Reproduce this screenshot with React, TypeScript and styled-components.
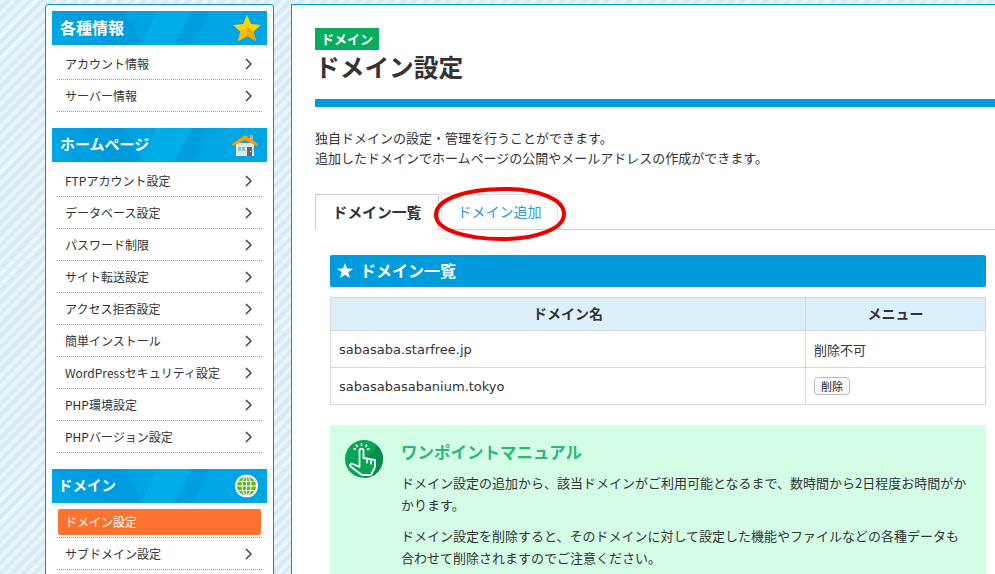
import React from 'react';
import styled, { createGlobalStyle } from 'styled-components';

const GlobalStyle = createGlobalStyle`
  html, body {
    margin: 0;
    height: 574px;
    overflow: hidden;
  }
  body {
    font-family: "DejaVu Sans", "Noto Sans CJK JP", sans-serif;
    color: #333;
    background: repeating-linear-gradient(135deg, #e8f6fb 0, #e8f6fb 4px, #d6ebf3 4px, #d6ebf3 8px);
  }
`;

const Page = styled.div`
  display: flex;
  align-items: flex-start;
  gap: 17px;
  padding: 4px 0 0 45px;
  width: 1100px;
`;

const Sidebar = styled.aside`
  flex: none;
  width: 215px;
  padding: 6px;
  background: #fff;
  border: 1px solid #0f8fc6;
  border-radius: 3px;
`;

const MenuGroup = styled.section`
  margin-bottom: 16px;
`;

const MenuHead = styled.h2<{ $inset?: number; $size?: number }>`
  position: relative;
  display: flex;
  align-items: center;
  box-sizing: border-box;
  height: 34px;
  margin: 0;
  padding: 0 0 3px ${(p) => p.$inset ?? 8}px;
  overflow: hidden;
  background: #00a0e0;
  color: #fff;
  font: bold ${(p) => p.$size ?? 15}px "Noto Sans CJK JP", sans-serif;
`;

const HeadPattern = styled.svg`
  position: absolute;
  inset: 0;
`;

const HeadLabel = styled.span`
  position: relative;
`;

const HeadIcon = styled.svg`
  position: absolute;
  top: 50%;
  transform: translateY(-50%);
`;

const MenuList = styled.ul`
  list-style: none;
  margin: 0;
  padding: 3px 5px 0;
`;

const MenuItem = styled.li`
  display: flex;
  align-items: center;
  justify-content: space-between;
  box-sizing: border-box;
  height: 32px;
  padding: 0 10px 0 8px;
  border-bottom: 1px dotted #999;
  font: 12px "Noto Sans CJK JP", sans-serif;
  color: #333;
`;

const CurrentItem = styled.li`
  box-sizing: border-box;
  height: 32px;
  padding: 3px 1px 2px;
  border-bottom: 1px dotted #999;
  font: 12px "Noto Sans CJK JP", sans-serif;
  color: #fff;
`;

const CurrentFill = styled.div`
  display: flex;
  align-items: center;
  box-sizing: border-box;
  height: 26px;
  padding: 0 0 2px 7px;
  background: #ff732e;
  border-radius: 2px;
`;

const Main = styled.main`
  flex: none;
  width: 686px;
  padding: 23px 23px 40px;
  background: #fff;
  border: 1px solid #0099dd;
`;

const Badge = styled.div`
  display: flex;
  align-items: center;
  justify-content: center;
  box-sizing: border-box;
  width: 64px;
  height: 22px;
  padding-bottom: 2px;
  background: #06ad5f;
  color: #fff;
  font: bold 13px "Noto Sans CJK JP", sans-serif;
`;

const Title = styled.h1`
  height: 37px;
  margin: 0;
  color: #333;
  font: bold 24.700px/33px "Noto Sans CJK JP", sans-serif;
`;

const TitleBar = styled.div`
  height: 8px;
  margin-top: 12px;
  background: #009bdc;
`;

const Lead = styled.p`
  margin: 21px 0 26px;
  font: 13px/20px "Noto Sans CJK JP", sans-serif;
`;

const Tabs = styled.div`
  position: relative;
  display: flex;
  align-items: flex-end;
  gap: 2px;
  height: 35px;
  border-bottom: 1px solid #ccc;
`;

const Tab = styled.div<{ $active?: boolean }>`
  display: flex;
  align-items: center;
  justify-content: center;
  box-sizing: border-box;
  height: ${(p) => (p.$active ? 36 : 35)}px;
  margin-bottom: ${(p) => (p.$active ? -1 : 0)}px;
  padding-bottom: 3px;
  width: ${(p) => (p.$active ? 124 : 117)}px;
  background: #fff;
  border: 1px solid ${(p) => (p.$active ? '#ccc' : '#e2e2e2')};
  border-bottom: none;
  color: ${(p) => (p.$active ? '#333' : '#2c9bd6')};
  font: ${(p) => (p.$active ? 'bold 14.800px' : 'normal 14px')} "Noto Sans CJK JP", sans-serif;
`;

const Ring = styled.svg`
  position: absolute;
  left: 117px;
  top: -9px;
  pointer-events: none;
`;

const Panel = styled.div`
  margin: 25px 15px 0;
`;

const PanelHead = styled.h3`
  display: flex;
  align-items: center;
  gap: 7px;
  box-sizing: border-box;
  height: 32px;
  margin: 0;
  padding: 0 0 2px 7px;
  background: #009bdc;
  border-radius: 2px;
  color: #fff;
  font: bold 16px "Noto Sans CJK JP", sans-serif;
`;

const Table = styled.table`
  width: 100%;
  margin-top: 10px;
  border-collapse: collapse;
  table-layout: fixed;
`;

const Th = styled.th`
  box-sizing: border-box;
  height: 33px;
  padding: 0 0 3px;
  background: #dcf0fb;
  border: 1px solid #d5d5d5;
  color: #333;
  font: bold 14px "Noto Sans CJK JP", sans-serif;
`;

const Td = styled.td`
  height: 36px;
  padding: 0 8px;
  border: 1px solid #d5d5d5;
  font: 13px "DejaVu Sans", "Noto Sans CJK JP", sans-serif;
  color: #333;
`;

const DeleteButton = styled.button`
  display: block;
  width: 36px;
  height: 18px;
  padding: 0;
  background: linear-gradient(#fff, #f8f8f8);
  border: 1px solid #bbb;
  border-radius: 4px;
  color: #222;
  font: 11px "Noto Sans CJK JP", sans-serif;
`;

const Note = styled.div`
  display: flex;
  gap: 18px;
  margin-top: 20px;
  padding: 15px 17px 20px 15px;
  background: #d4fde6;
`;

const NoteBody = styled.div`
  flex: 1;
`;

const NoteTitle = styled.h4`
  margin: 0 0 8px;
  color: #2db77b;
  font: bold 16.500px/24px "Noto Sans CJK JP", sans-serif;
`;

const NoteText = styled.p`
  margin: 0 0 9px;
  font: 13px/22px "Noto Sans CJK JP", sans-serif;
`;

const Chevron = () => (
  <svg width="7" height="12" viewBox="0 0 7 12" fill="none">
    <path d="M1 1l5 5-5 5" stroke="#444" strokeWidth="1.5" />
  </svg>
);

const Pattern = () => (
  <HeadPattern width="215" height="34" viewBox="0 0 215 34">
    <polygon points="0,0 25,34 0,34" fill="#00a6e3" />
    <polygon points="30,0 72,0 90,34 50,34" fill="#009bdd" />
    <polygon points="72,0 104,0 90,34" fill="#00a4e2" />
    <polygon points="104,0 140,0 122,34 90,34" fill="#00ade6" />
    <polygon points="140,0 157,0 141,34 122,34" fill="#009edf" />
    <polygon points="157,0 215,0 215,34 141,34" fill="#00a5e3" />
  </HeadPattern>
);

const StarIcon = () => (
  <HeadIcon style={{ right: 6 }} width="28" height="26" viewBox="0 0 28 26">
    <polygon points="14,0 18,9 28,10 20.5,16.5 23,26 14,21 5,26 7.5,16.5 0,10 10,9" fill="#ffd400" />
    <polygon points="14,11 20.5,16.5 23,26 14,21" fill="#f0a800" />
    <polygon points="14,11 14,21 5,26 7.5,16.5" fill="#f7be00" />
  </HeadIcon>
);

const HouseIcon = () => (
  <HeadIcon style={{ right: 9 }} width="26" height="22" viewBox="0 0 26 22">
    <rect x="18" y="1" width="3" height="8" fill="#b9a8a0" />
    <rect x="4" y="9" width="18" height="13" fill="#efe6d8" />
    <polygon points="13,1 26,10 25,12 13,6 1,12 0,10" fill="#ff9c00" />
    <rect x="6" y="13" width="3" height="4" fill="#6fcde0" />
    <rect x="10" y="13" width="3" height="4" fill="#6fcde0" />
    <rect x="15" y="13" width="5" height="9" fill="#666" />
    <rect x="18" y="17" width="1" height="1" fill="#fff" />
  </HeadIcon>
);

const GlobeIcon = () => (
  <HeadIcon style={{ right: 9 }} width="23" height="23" viewBox="0 0 23 23">
    <circle cx="11.5" cy="11.5" r="11.5" fill="#fff" />
    <circle cx="11.5" cy="11.5" r="9.5" fill="#5fb81c" />
    <g stroke="#fff" strokeWidth="1.1" fill="none">
      <ellipse cx="11.5" cy="11.5" rx="4.5" ry="9.5" />
      <path d="M11.5 2v19M2 11.5h19M3.5 7h16M3.5 16h16" />
    </g>
  </HeadIcon>
);

const HandIcon = () => (
  <svg width="38" height="38" viewBox="0 0 38 38" style={{ flex: 'none' }}>
    <circle cx="19" cy="19" r="19" fill="#07a455" />
    <path d="M32.4 5.600A19 19 0 0 1 20 38L14 27z" fill="#058c49" />
    <path
      d="M14.500 10.500c0-2.500 4-2.500 4 0V18l11.500 2v7l-4 8h-9L5.500 26.500c-1.500-1.500.5-3.500 2.500-2.500l6.500 3z"
      fill="#07a455"
      stroke="#fff"
      strokeWidth="1.800"
      strokeLinejoin="round"
    />
    <path d="M22 18.500v5M26 19.500v5" stroke="#fff" strokeWidth="1.500" />
    <path d="M16.500 3v3M11 4.500l1.500 2.500M22 4.500L20.500 7M8.500 8.500l2.500 1M24.500 8.500L22 9.500" stroke="#fff" strokeWidth="1.500" />
  </svg>
);

const menu = [
  {
    head: '各種情報',
    size: 16,
    icon: <StarIcon />,
    items: ['アカウント情報', 'サーバー情報'],
  },
  {
    head: 'ホームページ',
    icon: <HouseIcon />,
    items: [
      'FTPアカウント設定',
      'データベース設定',
      'パスワード制限',
      'サイト転送設定',
      'アクセス拒否設定',
      '簡単インストール',
      'WordPressセキュリティ設定',
      'PHP環境設定',
      'PHPバージョン設定',
    ],
  },
  {
    head: 'ドメイン',
    size: 14.5,
    icon: <GlobeIcon />,
    inset: 6,
    current: 'ドメイン設定',
    items: ['サブドメイン設定'],
  },
];

export default function App() {
  return (
    <Page>
      <GlobalStyle />
      <Sidebar>
        {menu.map((group) => (
          <MenuGroup key={group.head}>
            <MenuHead $inset={group.inset} $size={group.size}>
              <Pattern />
              <HeadLabel>{group.head}</HeadLabel>
              {group.icon}
            </MenuHead>
            <MenuList>
              {group.current && (
                <CurrentItem>
                  <CurrentFill>{group.current}</CurrentFill>
                </CurrentItem>
              )}
              {group.items.map((item) => (
                <MenuItem key={item}>
                  {item}
                  <Chevron />
                </MenuItem>
              ))}
            </MenuList>
          </MenuGroup>
        ))}
      </Sidebar>
      <Main>
        <Badge>ドメイン</Badge>
        <Title>ドメイン設定</Title>
        <TitleBar />
        <Lead>
          独自ドメインの設定・管理を行うことができます。
          <br />
          追加したドメインでホームページの公開やメールアドレスの作成ができます。
        </Lead>
        <Tabs>
          <Tab $active>ドメイン一覧</Tab>
          <Tab>ドメイン追加</Tab>
          <Ring width="136" height="58" viewBox="0 0 136 58" fill="none">
            <path
              d="M4 30C4 14 34 4 72 4c34 0 60 10 60 25 0 15-28 25-62 25C34 54 4 45 4 30z"
              stroke="#ee0000"
              strokeWidth="4"
            />
          </Ring>
        </Tabs>
        <Panel>
          <PanelHead>
            <svg width="16" height="15" viewBox="0 0 16 15">
              <polygon points="8,0 10,5.500 16,5.700 11.200,9.300 13,15 8,11.700 3,15 4.800,9.300 0,5.700 6,5.500" fill="#fff" />
            </svg>
            ドメイン一覧
          </PanelHead>
          <Table>
            <colgroup>
              <col style={{ width: 475 }} />
              <col />
            </colgroup>
            <thead>
              <tr>
                <Th>ドメイン名</Th>
                <Th>メニュー</Th>
              </tr>
            </thead>
            <tbody>
              <tr>
                <Td>sabasaba.starfree.jp</Td>
                <Td>削除不可</Td>
              </tr>
              <tr>
                <Td>sabasabasabanium.tokyo</Td>
                <Td>
                  <DeleteButton>削除</DeleteButton>
                </Td>
              </tr>
            </tbody>
          </Table>
          <Note>
            <HandIcon />
            <NoteBody>
              <NoteTitle>ワンポイントマニュアル</NoteTitle>
              <NoteText>
                ドメイン設定の追加から、該当ドメインがご利用可能となるまで、数時間から2日程度お時間がかかります。
              </NoteText>
              <NoteText>
                ドメイン設定を削除すると、そのドメインに対して設定した機能やファイルなどの各種データも合わせて削除されますのでご注意ください。
              </NoteText>
            </NoteBody>
          </Note>
        </Panel>
      </Main>
    </Page>
  );
}
